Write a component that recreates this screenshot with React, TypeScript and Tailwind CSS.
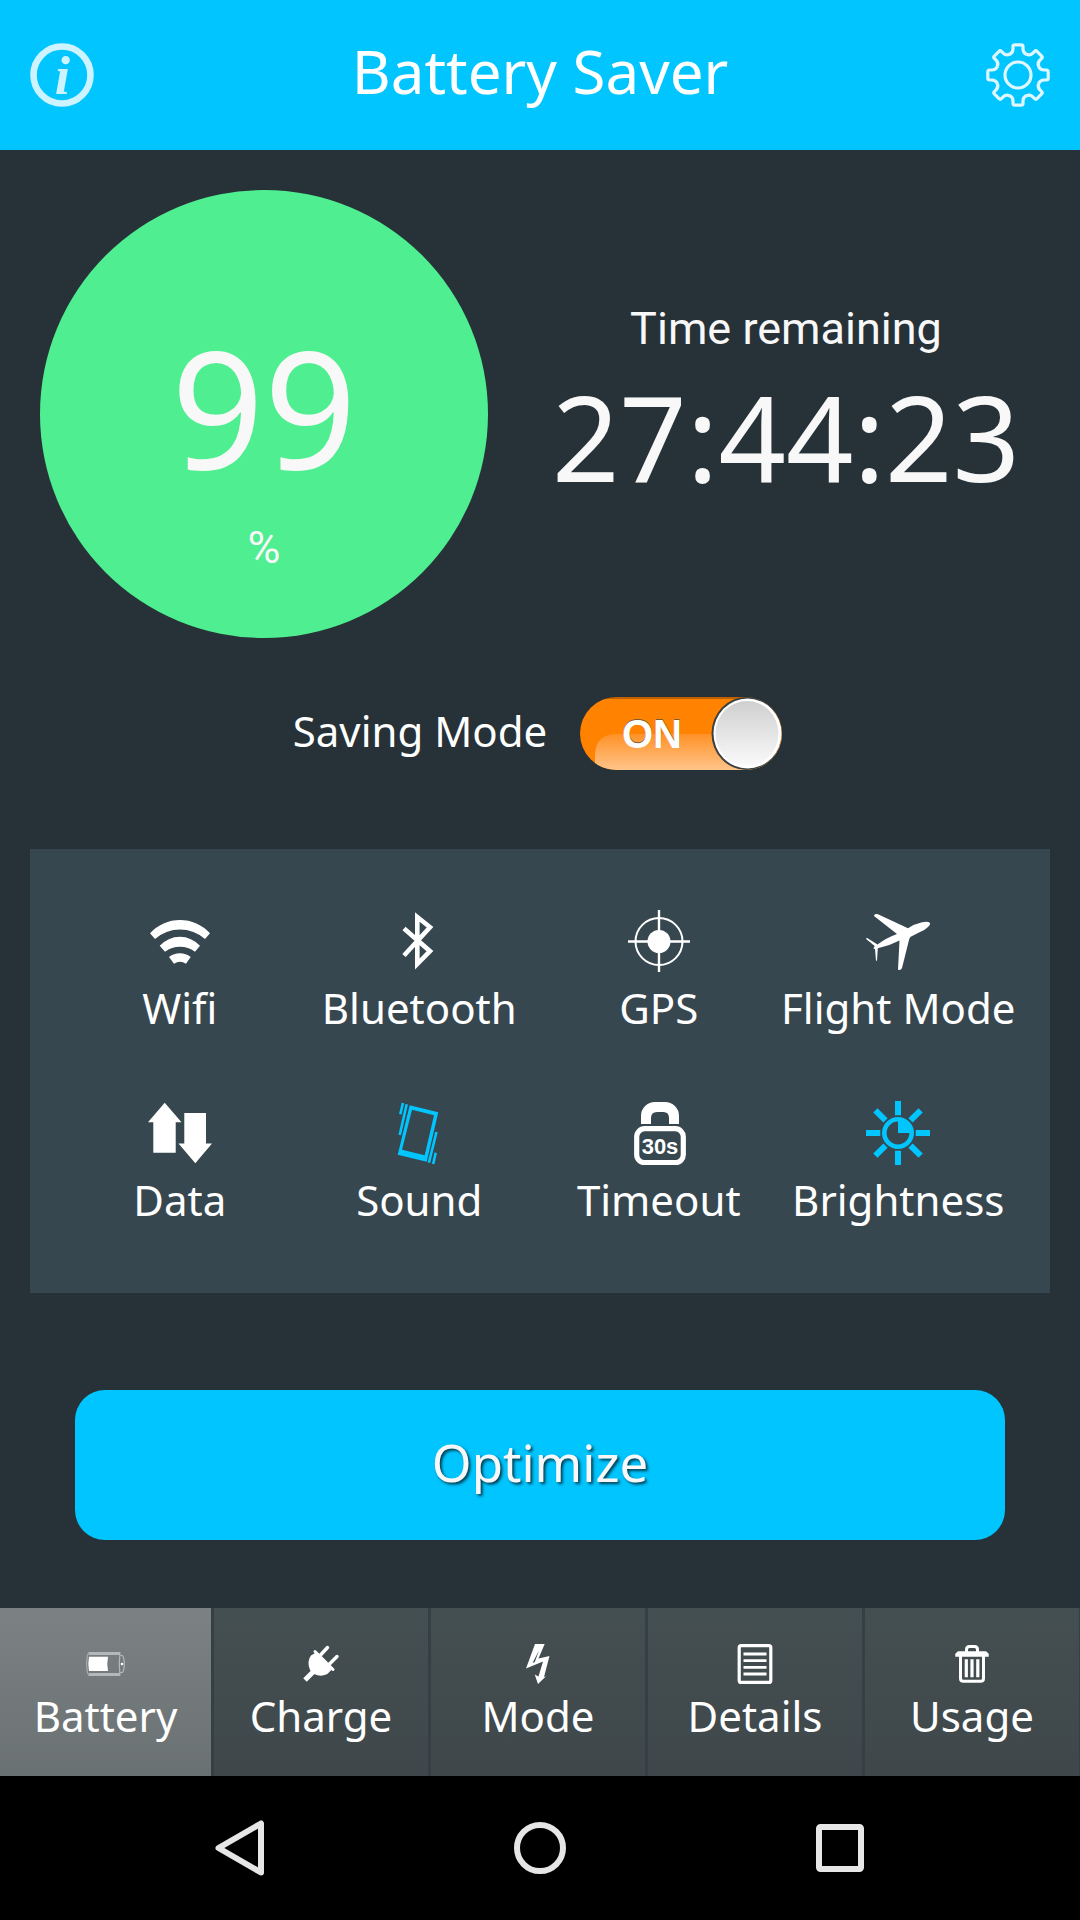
import { ReactNode, useState } from "react";

const WifiIcon = () => (
  <svg viewBox="0 0 64 64" className="size-16" fill="currentColor">
    <path d="M2 24.3A40.5 40.5 0 0 1 62 24.3L57 30A38 38 0 0 0 7 30Z" />
    <path d="M11.7 36.7A27.3 27.3 0 0 1 52 36.7L47 42.7A25 25 0 0 0 17 42.7Z" />
    <path d="M21 48A17.6 17.6 0 0 1 42.7 48L38 54.7A11 11 0 0 0 26 54.7Z" />
  </svg>
);

const BluetoothIcon = () => (
  <svg viewBox="0 0 64 64" className="size-16" fill="none" stroke="currentColor" strokeWidth="4.6">
    <path d="M17 19.5L43 42.2L30.300 55V8L43 18.3L17 46.5" />
  </svg>
);

const GpsIcon = () => (
  <svg viewBox="0 0 64 64" className="size-16" fill="none" stroke="currentColor">
    <circle cx="32" cy="32.500" r="23.5" strokeWidth="2" />
    <path d="M32 1V63M1 32.500H63" strokeWidth="2.4" />
    <circle cx="32" cy="32.500" r="11.5" fill="currentColor" stroke="none" />
  </svg>
);

const FlightIcon = () => (
  <svg viewBox="0 0 64 64" className="size-16" fill="currentColor">
    <path d="M64 14Q64.500 16 62 18Q59 21 54.500 22.700L44.700 27.700Q43.500 28.500 43 31L36 59Q35 61.500 32 60.800L33.500 31.500Q23 37 11.800 39.300L11 51.700H10L9 40L7.400 39.600L8.700 37L0.100 30L0.800 28.700L11.500 35.500Q20 29 31 25L8 7Q8 4.500 12 5.300L42 19.300Q49 14.800 56 13.300Q62 12 64 14Z" />
  </svg>
);

const DataIcon = () => (
  <svg viewBox="0 0 64 64" className="size-16" fill="currentColor">
    <path d="M16.700 1.700L33.500 21.300H27.700V51.700H5.300V21.300H0Z" />
    <path d="M36.300 12H58V42.500H64L47.300 62.200L30.500 42.500H36.300Z" />
  </svg>
);

const SoundIcon = () => (
  <svg viewBox="0 0 64 64" className="size-16" fill="currentColor">
    <path
      fillRule="evenodd"
      d="M22.700 4.300L51.300 11.300L39.700 60.700L10.700 53.700ZM25 8.700L15 48.700L37.700 54.300L47 14.300Z"
    />
    <path
      d="M15.900 2L13.300 13.300M19.700 3.300L12.700 34M49.500 31L41.900 61.700M48.700 51.700L46.200 63"
      stroke="currentColor"
      strokeWidth="2.6"
    />
  </svg>
);

const TimeoutIcon = () => (
  <svg viewBox="0 0 64 64" className="size-16" fill="currentColor">
    <path d="M14 23V15A14 14 0 0 1 28 1H38A14 14 0 0 1 52 15V23H42V17Q42 11 36.500 11H30Q24 11 24 17V23Z" />
    <rect x="9.700" y="27.700" width="46.600" height="34" rx="8" fill="none" stroke="currentColor" strokeWidth="5.200" />
    <text
      x="33"
      y="53"
      textAnchor="middle"
      fontFamily="'Liberation Sans', sans-serif"
      fontWeight="700"
      fontSize="22"
    >
      30s
    </text>
  </svg>
);

const BrightnessIcon = () => (
  <svg viewBox="0 0 64 64" className="size-16" fill="none" stroke="currentColor">
    <circle cx="32" cy="32" r="13.700" strokeWidth="4.600" />
    <path d="M32 32V19A13 13 0 0 1 45 32Z" fill="currentColor" stroke="none" />
    {[0, 45, 90, 135, 180, 225, 270, 315].map((deg) => (
      <path key={deg} d="M32 0V14.300" strokeWidth="6" transform={`rotate(${deg} 32 32)`} />
    ))}
  </svg>
);

const BatteryIcon = () => (
  <svg viewBox="0 0 40 40" className="size-10" fill="none">
    <path d="M3 9.500H34M3 30.500H34" stroke="#b4b8b9" strokeWidth="2.800" />
    <path d="M3 8.500Q0.700 11 0.700 20Q0.700 29 3 31.500" stroke="#a9aeaf" strokeWidth="1.200" />
    <path d="M34 8.500Q32.500 20 34 31.500M34.500 11.500H36.500Q38.300 14 38.300 20Q38.300 26 36.500 28.500H34.500" stroke="#b4b8b9" strokeWidth="1.200" />
    <path d="M3 12.800H22Q20.500 20 22 27H3Q1.600 20 3 12.800Z" fill="#fff" />
    <circle cx="36" cy="20" r="1.300" fill="#fff" />
  </svg>
);

const ChargeIcon = () => (
  <svg viewBox="0 0 40 40" className="size-10" fill="none" stroke="currentColor">
    <path d="M15 8.500L31 24.500Q28 31 20 31.800Q13 31.500 9 26Q5.500 17 10 11.500Z" fill="currentColor" stroke="none" />
    <path d="M14 7.500L32 25.500" strokeWidth="3" strokeLinecap="round" />
    <path d="M19.500 11L26.500 3.500M28.500 20L36 12.500" strokeWidth="3.400" strokeLinecap="round" />
    <path d="M13 27L4 36" strokeWidth="5" />
  </svg>
);

const ModeIcon = () => (
  <svg viewBox="0 0 40 40" className="size-10" fill="currentColor">
    <path
      fillRule="evenodd"
      d="M17 0H26.700L20.500 14.500L31.500 12L26 33L28 32.200L20 40L16.700 30.500L20.500 32.500L25 17.500L8 24.500ZM14.500 19L21 6.500L16.800 18Z"
    />
  </svg>
);

const DetailsIcon = () => (
  <svg viewBox="0 0 40 40" className="size-10" fill="none" stroke="currentColor">
    <rect x="4.200" y="1.600" width="31.600" height="36.800" rx="2" strokeWidth="3.200" />
    <path d="M8.500 10H31.500M8.500 16.700H31.500M8.500 23.300H31.500M8.500 30H31.500" strokeWidth="2.800" />
  </svg>
);

const UsageIcon = () => (
  <svg viewBox="0 0 40 40" className="size-10" fill="none" stroke="currentColor">
    <path d="M14.500 8V5.500Q14.500 2.500 17.500 2.500H22.500Q25.500 2.500 25.500 5.500V8" strokeWidth="3" />
    <path d="M6 7.300H34L36.700 9.800V12.700H3.300V9.800Z" fill="currentColor" stroke="none" />
    <path d="M8.500 12V34.500Q8.500 37.300 11.500 37.300H28.500Q31.500 37.300 31.500 34.500V12" strokeWidth="3" />
    <path d="M14.300 15.300V33.300M20 15.300V33.300M25.800 15.300V33.300" strokeWidth="3.200" />
  </svg>
);

const InfoIcon = () => (
  <svg viewBox="0 0 64 64" className="size-16 text-[#ccf3ff]" fill="currentColor">
    <circle cx="32" cy="32" r="28.500" fill="none" stroke="currentColor" strokeWidth="6.600" />
    <text
      x="32.500"
      y="50.500"
      textAnchor="middle"
      fontFamily="'Liberation Serif', serif"
      fontStyle="italic"
      fontWeight="700"
      fontSize="55"
    >
      i
    </text>
  </svg>
);

const GearIcon = () => (
  <svg viewBox="-32 -32 64 64" className="size-16 text-[#dff7ff]" fill="none" stroke="currentColor" strokeWidth="3.200">
    <circle r="13" />
    {[0, 45, 90, 135, 180, 225, 270, 315].map((deg) => (
      <path
        key={deg}
        d="M-8.600 -20.600Q-5 -22.100 -5 -26V-28.500Q-5 -30.200 -3 -30.200H3Q5 -30.200 5 -28.500V-26Q5 -22.100 8.600 -20.600"
        transform={`rotate(${deg})`}
      />
    ))}
  </svg>
);

const SwitchArt = ({ on }: { on: boolean }) => (
  <svg viewBox="0 0 204 76" className="block w-[204px] h-[76px]">
    <defs>
      <linearGradient id="gloss" x1="0" y1="0" x2="0" y2="1">
        <stop offset="0" stopColor="#ff9126" />
        <stop offset="1" stopColor="#ffc78f" />
      </linearGradient>
      <linearGradient id="knob" x1="0" y1="0" x2="0" y2="1">
        <stop offset="0" stopColor="#cfcfcf" />
        <stop offset="1" stopColor="#fafafa" />
      </linearGradient>
      <clipPath id="track">
        <rect x="1" y="1" width="202" height="73" rx="36.500" />
      </clipPath>
    </defs>
    <g clipPath="url(#track)">
      <rect width="204" height="76" fill={on ? "#ff8200" : "#7b8387"} />
      <rect width="204" height="3" fill="#000" opacity="0.250" />
      {on && <path d="M16 76V58Q17 38 38 38H204V76Z" fill="url(#gloss)" />}
    </g>
    <text
      x={on ? 73 : 132}
      y="51"
      textAnchor="middle"
      fontFamily="'Liberation Sans', sans-serif"
      fontWeight="700"
      fontSize="40"
      fill="#7a5a38"
    >
      {on ? "ON" : "OFF"}
    </text>
    <text
      x={on ? 73 : 132}
      y="52"
      textAnchor="middle"
      fontFamily="'Liberation Sans', sans-serif"
      fontWeight="700"
      fontSize="40"
      fill="#fff"
    >
      {on ? "ON" : "OFF"}
    </text>
    <ellipse cx={on ? 167.500 : 36} cy="37.500" rx="35" ry="36.500" fill="#3a3f40" />
    <ellipse cx={on ? 168.500 : 36} cy="37.500" rx="34" ry="35" fill="#fff" />
    <ellipse cx={on ? 168 : 36} cy="37.500" rx="31.500" ry="32.500" fill="url(#knob)" />
  </svg>
);

interface ITile {
  label: string;
  icon: ReactNode;
  active?: boolean;
}

const tiles: ITile[] = [
  { label: "Wifi", icon: <WifiIcon /> },
  { label: "Bluetooth", icon: <BluetoothIcon /> },
  { label: "GPS", icon: <GpsIcon /> },
  { label: "Flight Mode", icon: <FlightIcon /> },
  { label: "Data", icon: <DataIcon /> },
  { label: "Sound", icon: <SoundIcon />, active: true },
  { label: "Timeout", icon: <TimeoutIcon /> },
  { label: "Brightness", icon: <BrightnessIcon />, active: true },
];

const tabs: ITile[] = [
  { label: "Battery", icon: <BatteryIcon /> },
  { label: "Charge", icon: <ChargeIcon /> },
  { label: "Mode", icon: <ModeIcon /> },
  { label: "Details", icon: <DetailsIcon /> },
  { label: "Usage", icon: <UsageIcon /> },
];

const App = () => {
  const [saving, setSaving] = useState(true);
  const [tab, setTab] = useState("Battery");

  return (
    <div className="min-h-screen flex flex-col bg-[#263238] text-white font-['Noto_Sans',sans-serif]">
      <header className="h-[150px] px-[30px] flex items-center justify-between bg-[#00c5ff]">
        <button aria-label="Info">
          <InfoIcon />
        </button>
        <h1 className="pb-2 text-[60px] leading-[80px]">Battery Saver</h1>
        <button aria-label="Settings">
          <GearIcon />
        </button>
      </header>

      <main className="flex-1 flex flex-col">
        <section className="flex pt-10 pl-10 text-[#f8f8f8]">
          <div className="size-[448px] shrink-0 rounded-full bg-[#4fee90] flex flex-col items-center pt-[136px]">
            <span className="text-[162px] leading-[160px]">99</span>
            <span className="mt-[34px] text-[45px] leading-[56px] font-['Roboto',sans-serif]">%</span>
          </div>
          <div className="flex-1 flex flex-col items-center gap-5 pt-[111px] pl-1">
            <span className="text-[45px] leading-[56px] font-['Roboto',sans-serif]">Time remaining</span>
            <span className="text-[118px] leading-[120px]">27:44:23</span>
          </div>
        </section>

        <label className="mt-[58px] pr-1 flex items-center justify-center gap-8 cursor-pointer">
          <span className="pb-1.5 text-[42px] leading-[56px]">Saving Mode</span>
          <span className="relative">
            <input
              type="checkbox"
              role="switch"
              checked={saving}
              onChange={(e) => setSaving(e.target.checked)}
              className="absolute inset-0 size-full opacity-0 cursor-pointer"
            />
            <SwitchArt on={saving} />
          </span>
        </label>

        <section className="mt-[77px] mx-[30px] pl-[30px] pr-8 pt-[60px] pb-[65px] grid grid-cols-4 gap-y-[65px] bg-[#37474f]">
          {tiles.map((tile) => (
            <button key={tile.label} className="flex flex-col items-center gap-[7px]">
              <span className={tile.active ? "text-[#00c5ff]" : "text-white"}>{tile.icon}</span>
              <span className="text-[42px] leading-[56px] whitespace-nowrap">{tile.label}</span>
            </button>
          ))}
        </section>

        <button className="mt-[97px] mx-[75px] h-[150px] pb-1.5 rounded-[30px] bg-[#00c5ff] text-[51px] leading-[68px] text-[#f8f8f8] [text-shadow:2px_2px_3px_#000000b0]">
          Optimize
        </button>
      </main>

      <nav className="grid grid-cols-[214fr_217fr_217fr_217fr_215fr]">
        {tabs.map((item) => (
          <button
            key={item.label}
            onClick={() => setTab(item.label)}
            className={
              "flex flex-col items-center gap-1 pt-9 pb-8 border-r-3 last:border-r border-[#354044] bg-linear-to-b " +
              (tab === item.label ? "from-[#7c8284] to-[#6a7173]" : "from-[#444f51] to-[#3f474a]")
            }
          >
            {item.icon}
            <span className="text-[42px] leading-[56px]">{item.label}</span>
          </button>
        ))}
      </nav>

      <footer className="h-36 px-[90px] grid grid-cols-3 items-center justify-items-center bg-black text-[#e6e6e6]">
        <button aria-label="Back">
          <svg viewBox="0 0 56 56" className="size-14" fill="none" stroke="currentColor" strokeWidth="6" strokeLinejoin="round">
            <path d="M49 3.500V52.500L6.500 28Z" />
          </svg>
        </button>
        <button aria-label="Home">
          <svg viewBox="0 0 56 56" className="size-14" fill="none" stroke="currentColor" strokeWidth="6">
            <circle cx="28" cy="28" r="23" />
          </svg>
        </button>
        <button aria-label="Recent apps">
          <svg viewBox="0 0 56 56" className="size-14" fill="none" stroke="currentColor" strokeWidth="6" strokeLinejoin="round">
            <rect x="7" y="7" width="42" height="42" rx="1.500" />
          </svg>
        </button>
      </footer>
    </div>
  );
};

export default App;
